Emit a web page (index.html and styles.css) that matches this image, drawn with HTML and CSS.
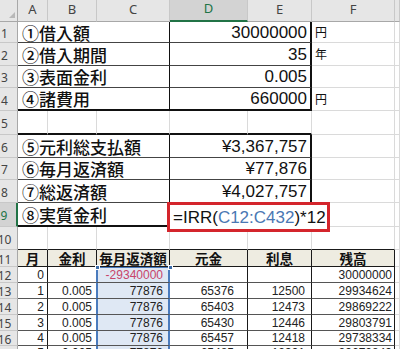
FILE: index.html
```html
<!DOCTYPE html>
<html lang="ja">
<head>
<meta charset="utf-8">
<title>実質金利 IRR</title>
<link rel="stylesheet" href="styles.css">
</head>
<body>
<div class="sheet">
  <div class="corner"></div>
  <div class="ch">A</div>
  <div class="ch">B</div>
  <div class="ch">C</div>
  <div class="ch sel">D</div>
  <div class="ch">E</div>
  <div class="ch">F</div>
  <div class="ch"></div>

  <div class="rh">1</div>
  <div class="lbl">①借入額</div>
  <div class="val">30000000</div>
  <div class="c unit">円</div>
  <div class="c"></div>

  <div class="rh">2</div>
  <div class="lbl">②借入期間</div>
  <div class="val">35</div>
  <div class="c unit">年</div>
  <div class="c"></div>

  <div class="rh">3</div>
  <div class="lbl">③表面金利</div>
  <div class="val">0.005</div>
  <div class="c unit"></div>
  <div class="c"></div>

  <div class="rh">4</div>
  <div class="lbl bk">④諸費用</div>
  <div class="val bk">660000</div>
  <div class="c unit">円</div>
  <div class="c"></div>

  <div class="rh">5</div>
  <div class="c bk"></div>
  <div class="c bk"></div>
  <div class="c bk"></div>
  <div class="c bk"></div>
  <div class="c bk"></div>
  <div class="c"></div>
  <div class="c"></div>

  <div class="rh">6</div>
  <div class="lbl">⑤元利総支払額</div>
  <div class="val">¥3,367,757</div>
  <div class="c"></div>
  <div class="c"></div>

  <div class="rh">7</div>
  <div class="lbl">⑥毎月返済額</div>
  <div class="val">¥77,876</div>
  <div class="c"></div>
  <div class="c"></div>

  <div class="rh">8</div>
  <div class="lbl">⑦総返済額</div>
  <div class="val">¥4,027,757</div>
  <div class="c"></div>
  <div class="c"></div>

  <div class="rh sel">9</div>
  <div class="lbl bk">⑧実質金利</div>
  <div class="val bk"></div>
  <div class="c"></div>
  <div class="c"></div>

  <div class="rh">10</div>
  <div class="c dk"></div>
  <div class="c dk"></div>
  <div class="c dk"></div>
  <div class="c dk"></div>
  <div class="c dk"></div>
  <div class="c dk"></div>
  <div class="c"></div>

  <div class="rh">11</div>
  <div class="hd">月</div>
  <div class="hd">金利</div>
  <div class="hd">毎月返済額</div>
  <div class="hd">元金</div>
  <div class="hd">利息</div>
  <div class="hd">残高</div>
  <div class="c"></div>

  <div class="rh">12</div>
  <div class="n ca">0</div>
  <div class="n cb"></div>
  <div class="n cc first neg">-29340000</div>
  <div class="n cd"></div>
  <div class="n ce"></div>
  <div class="n cf">30000000</div>
  <div class="c"></div>

  <div class="rh">13</div>
  <div class="n ca">1</div>
  <div class="n cb">0.005</div>
  <div class="n cc">77876</div>
  <div class="n cd">65376</div>
  <div class="n ce">12500</div>
  <div class="n cf">29934624</div>
  <div class="c"></div>

  <div class="rh">14</div>
  <div class="n ca">2</div>
  <div class="n cb">0.005</div>
  <div class="n cc">77876</div>
  <div class="n cd">65403</div>
  <div class="n ce">12473</div>
  <div class="n cf">29869222</div>
  <div class="c"></div>

  <div class="rh">15</div>
  <div class="n ca">3</div>
  <div class="n cb">0.005</div>
  <div class="n cc">77876</div>
  <div class="n cd">65430</div>
  <div class="n ce">12446</div>
  <div class="n cf">29803791</div>
  <div class="c"></div>

  <div class="rh">16</div>
  <div class="n ca">4</div>
  <div class="n cb">0.005</div>
  <div class="n cc">77876</div>
  <div class="n cd">65457</div>
  <div class="n ce">12418</div>
  <div class="n cf">29738334</div>
  <div class="c"></div>

  <div class="rh">17</div>
  <div class="n ca">5</div>
  <div class="n cb">0.005</div>
  <div class="n cc">77876</div>
  <div class="n cd">65485</div>
  <div class="n ce">12391</div>
  <div class="n cf">29672849</div>
  <div class="c"></div>

  <p class="irr">=IRR(<span class="ref">C12:C432</span>)*12</p>
  <span class="handle h1"></span>
  <span class="handle h2"></span>
</div>
</body>
</html>
```

FILE: styles.css
```css
* { box-sizing: border-box; margin: 0; padding: 0; }
html, body { width: 400px; height: 349px; overflow: hidden; background: #fff; }
body { font-family: "Liberation Sans", "Noto Sans CJK JP", sans-serif; color: #1a1a1a; }

.sheet {
  position: relative;
  display: grid;
  grid-template-columns: 18px 30px 49px 73px 78px 64px 83px 5px;
  grid-template-rows: 22px 21px 23px 22px 23px 24px 23px 22px 23px 24px 23px 17px 16px 16px 16px 16px 15px 16px;
}
.sheet > div {
  display: flex;
  align-items: center;
  white-space: nowrap;
  line-height: 1;
  border-right: 1px solid #dadada;
  border-bottom: 1px solid #dadada;
}

.corner {
  position: relative;
  background: #e6e6e6;
  border-right-color: #a8a8a8 !important;
  border-bottom-color: #a8a8a8 !important;
}
.corner::after {
  content: "";
  position: absolute;
  right: 2px;
  bottom: 3px;
  border-left: 6px solid transparent;
  border-bottom: 6px solid #b8b8b8;
}

.sheet > .ch {
  background: #e6e6e6;
  border-right: 1px solid #c8c8c8;
  border-bottom: 1px solid #a8a8a8;
  justify-content: center;
  align-items: flex-end;
  padding-bottom: 3px;
  font: 13px "Noto Sans", sans-serif;
  color: #444;
}
.sheet > .ch.sel {
  background: #d3d3d3;
  color: #217346;
  border-bottom: 2px solid #217346;
}

.sheet > .rh {
  background: #e6e6e6;
  border-right: 1px solid #a8a8a8;
  border-bottom: 1px solid #c8c8c8;
  justify-content: center;
  padding-right: 8px;
  padding-top: 2px;
  font: 12px "Noto Sans", sans-serif;
  color: #444;
}
.sheet > .rh.sel {
  background: #d3d3d3;
  color: #217346;
  border-right: 2px solid #217346;
}

.sheet > .lbl {
  grid-column: span 3;
  padding-left: 4px;
  font: 500 17px "Noto Sans CJK JP", sans-serif;
  color: #111;
  border-right: 1px solid #111;
  border-bottom: 1px solid #444;
}
.sheet > .val {
  grid-column: span 2;
  justify-content: flex-end;
  padding-right: 3px;
  font-size: 17px;
  color: #111;
  border-right: 2px solid #111;
  border-bottom: 1px solid #444;
}
.sheet > .bk { border-bottom: 2px solid #111; }
.sheet > .dk { border-bottom: 1px solid #1a1a1a; }

.unit {
  padding-left: 3px;
  font: 12px "Noto Sans CJK JP", sans-serif;
  color: #111;
}

.sheet > .hd {
  background: #eeece1;
  justify-content: center;
  border-right: 1px solid #1a1a1a;
  border-bottom: 1px solid #1a1a1a;
  font: 700 13.5px "Noto Sans CJK JP", sans-serif;
  color: #111;
}

.sheet > .n {
  justify-content: flex-end;
  font-size: 12px;
  color: #222;
  border-right: 1px solid #1a1a1a;
  border-bottom: 1px solid #555;
}
.sheet > .ca { padding-right: 3px; }
.sheet > .cb { padding-right: 4px; border-right-color: #4a7bbd; }
.sheet > .cc {
  padding-right: 6px;
  background: #dfe8f4;
  border-right-color: #4a7bbd;
  box-shadow: inset 1px 0 #4a7bbd, inset -1px 0 #4a7bbd;
}
.sheet > .cc.first { box-shadow: inset 1px 0 #4a7bbd, inset -1px 0 #4a7bbd, inset 0 1px #4a7bbd; }
.sheet > .cd { padding-right: 13px; }
.sheet > .ce { padding-right: 6px; }
.sheet > .cf { padding-right: 2px; }
.sheet > .neg { color: #c8446a; }
.sheet > .n:nth-last-child(-n+10) { align-items: flex-start; padding-top: 1px; }

.irr {
  position: absolute;
  left: 167px;
  top: 202px;
  width: 163px;
  height: 30px;
  border: 3px solid #d4252c;
  background: #fff;
  padding-left: 3px;
  display: flex;
  align-items: center;
  font-size: 17px;
  line-height: 1;
  color: #111;
  white-space: nowrap;
}
.ref { color: #4a77b3; }

.handle {
  position: absolute;
  width: 5px;
  height: 5px;
  background: #3e6ea9;
  border: 1px solid #fff;
}
.h1 { left: 95px; top: 265px; }
.h2 { left: 168px; top: 265px; }
```
